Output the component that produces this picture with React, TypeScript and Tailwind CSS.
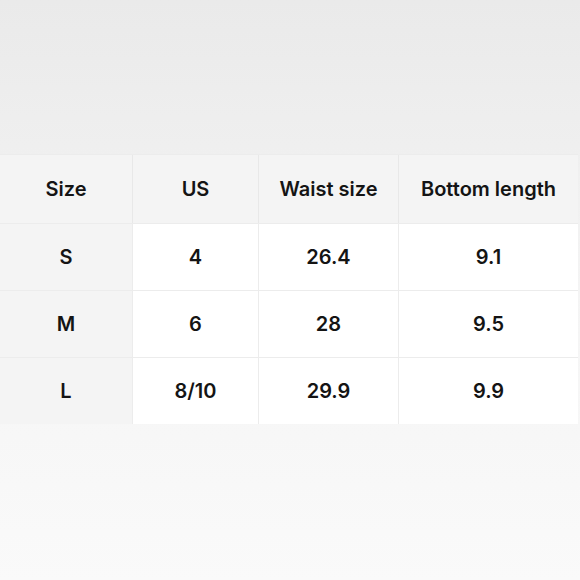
const header = ["Size", "US", "Waist size", "Bottom length"];

const rows = [
  ["S", "4", "26.4", "9.1"],
  ["M", "6", "28", "9.5"],
  ["L", "8/10", "29.9", "9.9"],
];

export default function App() {
  return (
    <div
      className="h-[580px] w-[580px] bg-gradient-to-b from-[#eaeaea] via-[#f4f4f4] to-[#fafafa] pt-[154px] text-[#141414]"
      style={{ fontFamily: "Inter, 'Liberation Sans', sans-serif" }}
    >
      <div className="grid w-[578px] grid-cols-[132px_126px_140px_180px] border-t border-[#ececec] text-[20px] font-semibold">
        {header.map((h, i) => (
          <div
            key={h}
            className={`flex h-[68px] items-center justify-center bg-[#f4f4f4] ${i > 0 ? "border-l border-[#e8e8e8]" : ""}`}
          >
            {h}
          </div>
        ))}
        {rows.map((row, r) =>
          row.map((cell, c) => (
            <div
              key={`${r}-${c}`}
              className={`flex h-[67px] items-center justify-center border-t border-[#ececec] ${c === 0 ? "bg-[#f4f4f4]" : "border-l border-[#ececec] bg-white"}`}
            >
              {cell}
            </div>
          ))
        )}
      </div>
    </div>
  );
}
